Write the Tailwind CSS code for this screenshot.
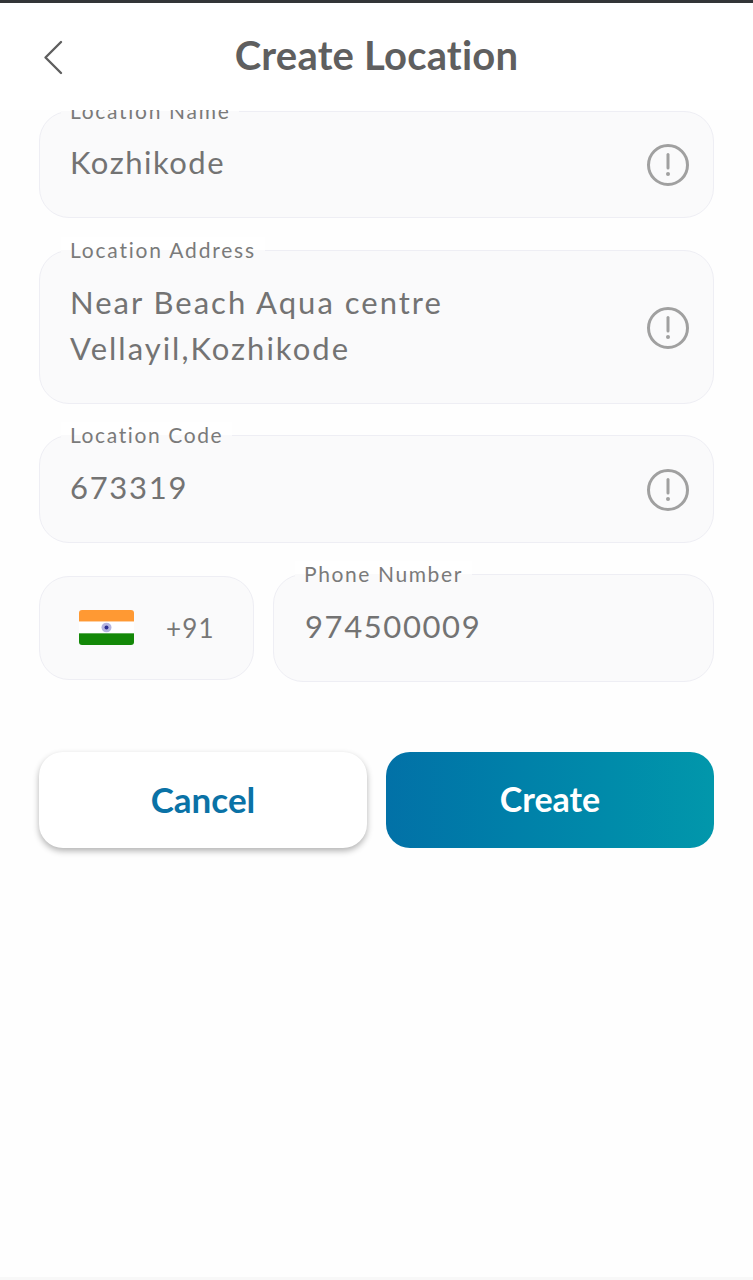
<!DOCTYPE html>
<html><head><meta charset="utf-8">
<script src="https://cdn.jsdelivr.net/npm/@tailwindcss/browser@4"></script>
</head>
<body class="bg-white">
<div class="w-[753px] h-[1280px] flex flex-col bg-[#fefefe] overflow-hidden font-['Lato','Noto_Sans',sans-serif]">
  <div class="h-[3px] bg-[#333538] shrink-0"></div>
  <header class="relative h-[107px] shrink-0 flex items-center justify-center pb-[3px] bg-white">
    <svg class="absolute left-[42px] top-[36px]" width="22" height="36" viewBox="0 0 22 36" fill="none" stroke="#5f5f5f" stroke-width="2.4" stroke-linecap="round" stroke-linejoin="round"><path d="M19 3 L3.5 18.5 L19 34"/></svg>
    <h1 class="text-[40px] tracking-[0.2px] font-bold text-[#5f5f5f] leading-none font-['Lato',sans-serif]">Create Location</h1>
  </header>
  <main class="flex-1 overflow-hidden px-[39px] pt-px flex flex-col">
    <div class="relative h-[107px] shrink-0 rounded-[30px] border border-[#eeeef4] bg-[#fafafb] flex items-center justify-between pl-[30px] pr-[23px]">
      <span class="absolute left-[21px] top-[-14px] bg-[linear-gradient(to_bottom,#fff_50%,#fafafb_50%)] px-[9px] text-[21px] leading-[26px] tracking-[1.7px] text-[#7a7a7a]">Location Name</span>
      <span class="text-[31px] tracking-[1.5px] text-[#737373] -mt-[4px]">Kozhikode</span>
      <svg width="44" height="44" viewBox="0 0 44 44" fill="none"><circle cx="22" cy="22" r="19.5" stroke="#a0a0a0" stroke-width="3"/><path d="M22 11.5V25" stroke="#a0a0a0" stroke-width="3" stroke-linecap="round"/><circle cx="22" cy="31" r="2" fill="#a0a0a0"/></svg>
    </div>
    <div class="relative h-[154px] mt-[32px] shrink-0 rounded-[30px] border border-[#eeeef4] bg-[#fafafb] flex items-center justify-between pl-[30px] pr-[23px]">
      <span class="absolute left-[21px] top-[-14px] bg-[linear-gradient(to_bottom,#fff_50%,#fafafb_50%)] px-[9px] text-[21px] leading-[26px] tracking-[1.8px] text-[#7a7a7a]">Location Address</span>
      <span class="text-[31px] leading-[46px] tracking-[2px] text-[#737373] -mt-[4px]">Near Beach Aqua centre<br>Vellayil,Kozhikode</span>
      <svg class="mt-[2px]" width="44" height="44" viewBox="0 0 44 44" fill="none"><circle cx="22" cy="22" r="19.5" stroke="#a0a0a0" stroke-width="3"/><path d="M22 11.5V25" stroke="#a0a0a0" stroke-width="3" stroke-linecap="round"/><circle cx="22" cy="31" r="2" fill="#a0a0a0"/></svg>
    </div>
    <div class="relative h-[108px] mt-[31px] shrink-0 rounded-[30px] border border-[#eeeef4] bg-[#fafafb] flex items-center justify-between pl-[30px] pr-[23px]">
      <span class="absolute left-[21px] top-[-14px] bg-[linear-gradient(to_bottom,#fff_50%,#fafafb_50%)] px-[9px] text-[21px] leading-[26px] tracking-[1.6px] text-[#7a7a7a]">Location Code</span>
      <span class="text-[31px] tracking-[1.7px] text-[#737373] -mt-[4px]">673319</span>
      <svg class="mt-[2px]" width="44" height="44" viewBox="0 0 44 44" fill="none"><circle cx="22" cy="22" r="19.5" stroke="#a0a0a0" stroke-width="3"/><path d="M22 11.5V25" stroke="#a0a0a0" stroke-width="3" stroke-linecap="round"/><circle cx="22" cy="31" r="2" fill="#a0a0a0"/></svg>
    </div>
    <div class="flex items-center gap-[19px] mt-[31px] shrink-0">
      <div class="w-[215px] h-[104px] rounded-[30px] border border-[#eeeef4] bg-[#fafafb] flex items-center pl-[39px]">
        <svg width="55" height="35" viewBox="0 0 55 36" preserveAspectRatio="none" class="rounded-[3px] -mt-[1px]"><rect width="55" height="12" fill="#ff9933"/><rect y="12" width="55" height="12" fill="#ffffff"/><rect y="24" width="55" height="12" fill="#138808"/><circle cx="27.5" cy="18" r="5" fill="#b4b4e0"/><circle cx="27.5" cy="18" r="2" fill="#2d2d90"/></svg>
        <span class="ml-[32px] text-[26px] tracking-[1.2px] text-[#777777]">+91</span>
      </div>
      <div class="relative flex-1 h-[108px] rounded-[30px] border border-[#eeeef4] bg-[#fafafb] flex items-center pl-[31px]">
        <span class="absolute left-[21px] top-[-14px] bg-[linear-gradient(to_bottom,#fff_50%,#fafafb_50%)] px-[9px] text-[21px] leading-[26px] tracking-[1.6px] text-[#7a7a7a]">Phone Number</span>
        <span class="text-[31px] tracking-[1.6px] text-[#737373] -mt-[4px]">974500009</span>
      </div>
    </div>
    <div class="flex gap-[19px] mt-[70px] shrink-0">
      <button class="w-[328px] h-[96px] rounded-[24px] bg-white shadow-[0_3px_6px_rgba(0,0,0,0.3)] text-[35px] leading-[40px] pb-[3px] font-bold text-[#0a72a6]">Cancel</button>
      <button class="w-[328px] h-[96px] rounded-[24px] bg-gradient-to-r from-[#0271a7] to-[#0297ab] text-[34px] leading-[40px] pb-[2px] font-bold text-white">Create</button>
    </div>
  </main>
  <div class="h-[3px] shrink-0 bg-[#f8f8f8]"></div>
</div>
</body></html>
